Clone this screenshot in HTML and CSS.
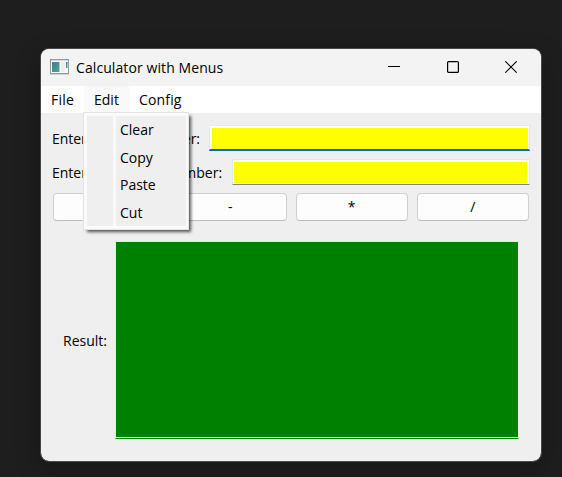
FILE: index.html
```html
<!DOCTYPE html>
<html lang="en">
<head>
<meta charset="utf-8">
<title>Calculator with Menus</title>
<link rel="stylesheet" href="styles.css">
</head>
<body>
<main class="window">
  <header class="titlebar">
    <svg class="app-icon" width="19" height="16" viewBox="0 0 19 16">
      <defs><linearGradient id="pane" x1="0" y1="0" x2="1" y2="1"><stop offset="0" stop-color="#4776a8"/><stop offset="1" stop-color="#52a878"/></linearGradient></defs>
      <rect x=".5" y=".5" width="18" height="14" fill="#fafafa" stroke="#9299a0"/>
      <path d="M1 1.5h17" stroke="#d5dae0"/>
      <rect x="2" y="3" width="7.5" height="10" fill="url(#pane)"/>
      <rect x="11" y="3" width="4" height="10" fill="#e9edf2"/>
      <rect x="16" y="3" width="1.5" height="6" fill="url(#pane)"/>
      <path d="M0 15.5h19" stroke="#d0d0d0"/>
    </svg>
    <h1 class="title">Calculator with Menus</h1>
    <div class="controls">
      <svg width="12" height="14" viewBox="0 0 12 14"><path d="M0 5.5h12" stroke="#000"/></svg>
      <svg width="12" height="14" viewBox="0 0 12 14"><rect x=".6" y=".6" width="10.8" height="10.8" rx="1" fill="none" stroke="#000" stroke-width="1.2"/></svg>
      <svg width="12" height="14" viewBox="0 0 12 14"><path d="M.3 .3l11.4 11.4M11.7 .3L.3 11.7" stroke="#000" stroke-width="1.1"/></svg>
    </div>
  </header>
  <nav class="menubar">
    <span class="menu file">File</span>
    <div class="menu edit">Edit
      <ul class="popup">
        <li>Clear</li><li>Copy</li><li>Paste</li><li>Cut</li>
      </ul>
    </div>
    <span class="menu config">Config</span>
  </nav>
  <section class="content">
    <label class="row"><span class="caption first">Enter the first number:</span><input class="field focused" type="text"></label>
    <label class="row second-row"><span class="caption second">Enter the second number:</span><input class="field" type="text"></label>
    <div class="buttons">
      <button>+</button><button>-</button><button>*</button><button>/</button>
    </div>
    <div class="result"><span class="result-label">Result:</span><div class="output"></div></div>
  </section>
</main>
</body>
</html>
```
FILE: styles.css
```css
* { box-sizing: border-box; }
body {
  margin: 0;
  height: 477px;
  padding: 48px 20px 15px 40px;
  overflow: hidden;
  background: #1e1e1e;
  color: #000;
  font: 14px/20px "Open Sans", "Noto Sans", sans-serif;
}
.window {
  width: 502px;
  height: 414px;
  border: 1px solid #484848;
  border-radius: 9px;
  background: #efefef;
  background-clip: padding-box;
  box-shadow: 0 8px 24px rgba(0, 0, 0, .25);
}
.titlebar {
  display: flex;
  align-items: center;
  height: 37px;
  padding: 0 24px 0 9px;
  border-radius: 8px 8px 0 0;
  background: #f3f3f3;
}
.app-icon { margin: -2px 7px 0 0; }
.title { margin: 0; font-size: 14px; font-weight: 400; letter-spacing: .09px; }
.controls { display: flex; gap: 46.5px; margin-left: auto; }
.controls svg { display: block; }
.menubar { display: flex; height: 27px; background: #fff; line-height: 27px; }
.menu { padding-left: 10px; white-space: nowrap; }
.file { width: 43px; letter-spacing: .2px; }
.edit { position: relative; width: 46px; height: 26px; border-radius: 3px; background: #f9f9f9; }
.config { padding-left: 9px; letter-spacing: .15px; }
.popup {
  position: absolute;
  z-index: 2;
  top: 26px;
  left: -1px;
  width: 106px;
  height: 118px;
  margin: 0;
  padding: 3px 2px 3px 3px;
  border: 1px solid #e3e3e3;
  background: #fafafa;
  box-shadow: 3px 3px 3px -1px rgba(0, 0, 0, .65);
  list-style: none;
}
.popup li {
  height: 27.5px;
  padding-left: 33px;
  line-height: 28px;
  background: linear-gradient(to right, #efefef 26px, #fafafa 26px 29px, #efefef 29px);
}
.content { padding: 12px 11px 0 12px; }
.row { display: flex; height: 26px; line-height: 27px; }
.second-row { margin-top: 8px; }
.caption { flex: none; margin-left: -1px; letter-spacing: -.04px; white-space: nowrap; }
.first { width: 157px; }
.second { width: 180px; letter-spacing: 0; }
.field {
  flex: 1;
  min-width: 0;
  height: 26px;
  margin: 0;
  padding: 2px 2px 1px 1px;
  outline: 0;
  border: 1px solid #e7e7e7;
  border-radius: 0;
  border-bottom: 1px solid #858585;
  background: linear-gradient(#ff0, #ff0) content-box, #fff;
}
.field.focused { padding: 2px 1px 0 2px; border-bottom: 2px solid #0067c0; }
.buttons {
  display: grid;
  grid-template-columns: repeat(4, 1fr);
  gap: 9px;
  margin: 8px 1px 0 0;
}
.buttons button {
  height: 28px;
  padding: 0;
  border: 1px solid #d0d0d0;
  border-bottom-color: #bcbcbc;
  border-radius: 4px;
  background: #fdfdfd;
  color: #000;
  font: inherit;
}
.result { display: flex; align-items: center; margin: 20px 11px 0 10px; }
.result-label { width: 52px; padding-top: 2px; }
.output {
  flex: 1;
  height: 198px;
  border: 1px solid #e8e8e8;
  border-bottom-color: #008000;
  background: #008000;
  box-shadow: inset 0 -1px #fff;
}
```
